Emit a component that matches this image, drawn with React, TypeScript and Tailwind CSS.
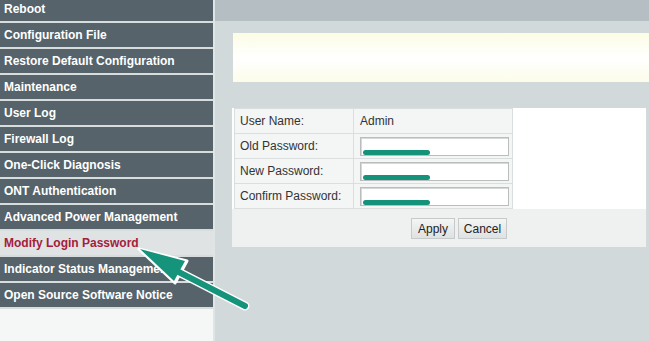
import React from 'react';

const menu = [
  'Reboot',
  'Configuration File',
  'Restore Default Configuration',
  'Maintenance',
  'User Log',
  'Firewall Log',
  'One-Click Diagnosis',
  'ONT Authentication',
  'Advanced Power Management',
  'Modify Login Password',
  'Indicator Status Management',
  'Open Source Software Notice',
];

const ACTIVE = 'Modify Login Password';

const PasswordRow: React.FC<{ label: string; mark?: boolean }> = ({ label }) => (
  <div className="flex h-[25px] border-b border-[#dadede]">
    <div className="w-[119px] flex items-center pl-[5px] border-r border-[#dadede] bg-[#f4f5f5]">{label}</div>
    <div className="flex-1 flex items-center pl-[6px] pr-[2px] bg-[#f4f5f5] relative">
      <div className="w-[149px] h-[19px] bg-white border border-[#b9bdbe] shadow-[inset_1px_1px_0_#d6d9da]" />
      <div className="absolute left-[9px] bottom-[3px] w-[67px] h-[5px] rounded-full bg-[#15937a]" />
    </div>
  </div>
);

export default function App() {
  return (
    <div
      className="relative w-[649px] h-[341px] overflow-hidden flex text-[12px]"
      style={{ fontFamily: '"Liberation Sans", Arial, sans-serif' }}
    >
      {/* sidebar */}
      <div className="w-[213px] flex flex-col bg-[#f5f6f6]">
        <div className="flex flex-col gap-[2px] bg-[#d7dcdd] pb-[2px]">
          {menu.map((item, i) =>
            item === ACTIVE ? (
              <div key={item} className="h-[24px] flex items-center pl-[4px] bg-[#dfe3e4] text-[#a3203c] font-bold">
                {item}
              </div>
            ) : (
              <div
                key={item}
                className={`${i === 0 ? 'h-[21px] pb-[3px]' : 'h-[24px]'} flex items-center pl-[4px] bg-[#56636a] text-white font-bold`}
              >
                {item}
              </div>
            )
          )}
        </div>
      </div>

      {/* main */}
      <div className="flex-1 flex flex-col bg-[#d2d9da] border-l-[2px] border-[#dfe4e5]">
        <div className="h-[21px] bg-[#b5bec3]" />
        <div className="ml-[18px] mt-[12px] h-[49px] bg-gradient-to-b from-[#fbfde4] via-white to-[#fcfde9]" />
        <div className="ml-[17px] mr-[3px] mt-[26px] h-[139px] bg-[#eff1f1] flex flex-col text-[#333]">
          <div className="flex bg-white">
            <div className="w-[278px] ml-[2px] flex flex-col border-l border-t border-[#dadede]">
              <div className="flex h-[25px] border-b border-[#dadede]">
                <div className="w-[119px] flex items-center pl-[5px] border-r border-[#dadede] bg-[#f4f5f5]">User Name:</div>
                <div className="flex-1 flex items-center pl-[6px] bg-[#f4f5f5]">Admin</div>
              </div>
              <PasswordRow label="Old Password:" />
              <PasswordRow label="New Password:" />
              <PasswordRow label="Confirm Password:" />
            </div>
            <div className="flex-1 border-l border-[#dadede] bg-white" />
          </div>
          <div className="flex gap-[3px] ml-[179px] mt-[9px]">
            <button className="w-[44px] h-[21px] bg-gradient-to-b from-[#f4f5f5] to-[#dfe2e2] border border-[#c6cacb] text-[#222] text-[12px]">
              Apply
            </button>
            <button className="w-[49px] h-[21px] bg-gradient-to-b from-[#f4f5f5] to-[#dfe2e2] border border-[#c6cacb] text-[#222] text-[12px]">
              Cancel
            </button>
          </div>
        </div>
      </div>

      {/* annotation arrow */}
      <svg className="absolute left-0 top-0 pointer-events-none" width="649" height="341" viewBox="0 0 649 341">
        <line x1="245" y1="306" x2="165" y2="265" stroke="#ffffff" strokeWidth="9" strokeLinecap="round" />
        <polygon points="139,249 187,261 175,283" fill="#ffffff" stroke="#ffffff" strokeWidth="3" strokeLinejoin="round" />
        <line x1="245" y1="306" x2="165" y2="265" stroke="#16937b" strokeWidth="6" strokeLinecap="round" />
        <polygon points="140,249 185,261 174,281 " fill="#16937b" />
      </svg>
    </div>
  );
}
